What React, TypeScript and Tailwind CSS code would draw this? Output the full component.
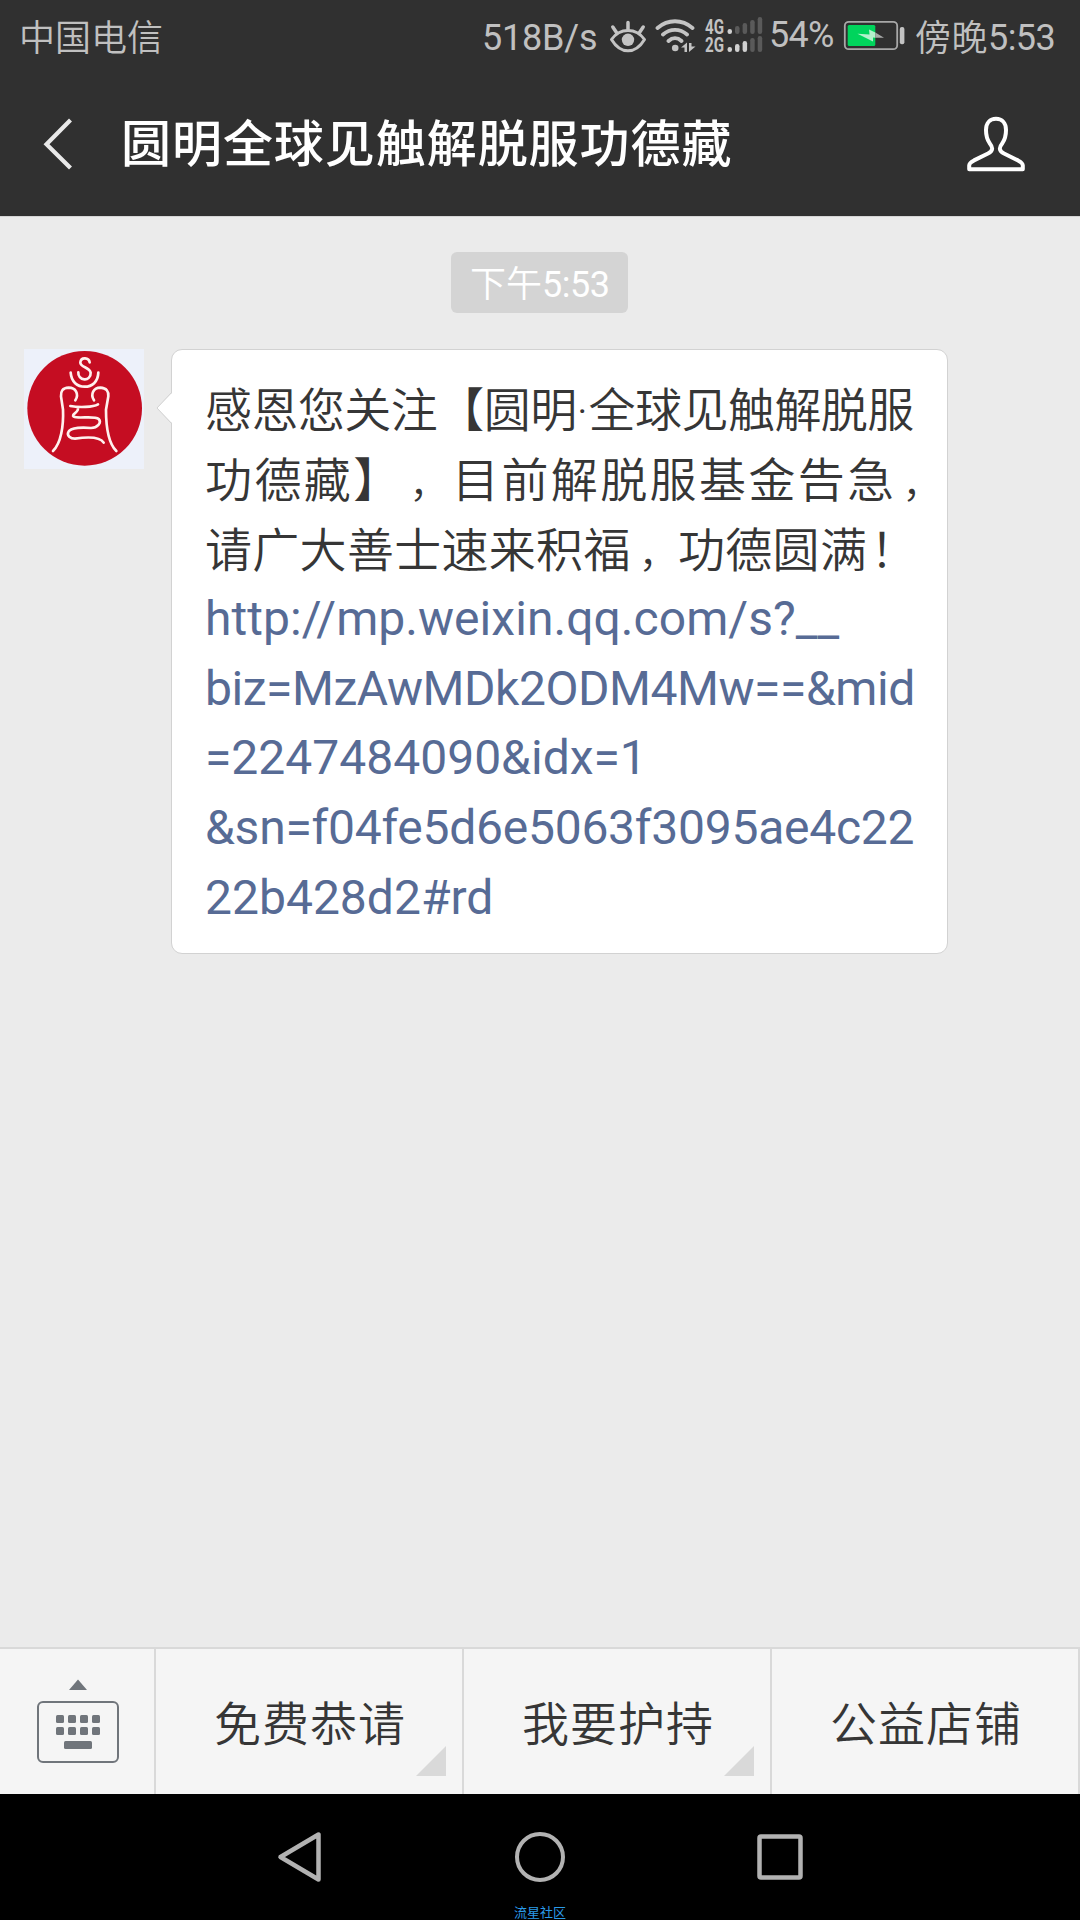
import type { ReactNode } from "react";

function EyeIcon() {
  return (
    <svg className="mt-[20px] h-[34px] w-[38px] shrink-0" viewBox="609 20 38 34" fill="none" stroke="#c3c3c3" strokeWidth="3">
      <path d="M611.5 39.5C616 33 622 30.500 628 30.500S640 33 644.500 39.500C640 47 634 50.800 628 50.800S616 47 611.500 39.500Z" strokeLinejoin="round" />
      <circle cx="628" cy="39.800" r="6.200" fill="#c3c3c3" stroke="none" />
      <path d="M628 22.500V29M612.800 27L616.500 32.500M643.200 27L639.500 32.500" strokeLinecap="round" strokeWidth="3.500" />
    </svg>
  );
}

function WifiIcon() {
  return (
    <svg className="ml-[8px] mt-[17px] h-[37px] w-[41px] shrink-0" viewBox="655 17 41 37" fill="none" stroke="#c3c3c3" strokeWidth="3.800" strokeLinecap="round">
      <path d="M657.500 28C668 19 682 19 692.500 28M663 34.500C670 28.300 680 28.300 687 34.500M668.500 41C672.500 37.300 677.500 37.300 681.500 41" />
      <circle cx="675.200" cy="48" r="3.300" fill="#c3c3c3" stroke="none" />
      <path d="M681 47.500L687 42.500V52H684.500V47.500ZM689 43H691.500V46.500H695.500L689 52Z" fill="#c3c3c3" stroke="none" />
    </svg>
  );
}

function SignalIcon() {
  const bars = [
    { x: 727.5, h: 5 },
    { x: 735, h: 8 },
    { x: 742.6, h: 11 },
    { x: 750.2, h: 14 },
    { x: 757.7, h: 17 },
  ];
  return (
    <svg className="ml-[8px] mt-[12px] h-[48px] w-[60px] shrink-0" viewBox="704 12 60 48">
      <g fill="#c3c3c3" fontFamily="Roboto, sans-serif" fontWeight="700" fontSize="20">
        <text x="705" y="34" textLength="19" lengthAdjust="spacingAndGlyphs">4G</text>
        <text x="705" y="52" textLength="19" lengthAdjust="spacingAndGlyphs">2G</text>
      </g>
      {bars.map((b, i) => (
        <g key={b.x}>
          <rect x={b.x} y={34 - b.h} width="4.500" height={b.h} rx="2.200" fill={i < 1 ? "#d0d0d0" : "#5a5a5a"} />
          <rect x={b.x} y={52 - (i === 4 ? 16 : b.h)} width="4.500" height={i === 4 ? 16 : b.h} rx="2.200" fill={i < 3 ? "#d0d0d0" : "#5a5a5a"} />
        </g>
      ))}
    </svg>
  );
}

function BatteryIcon() {
  return (
    <svg className="ml-[9px] mt-[20px] h-[32px] w-[64px] shrink-0" viewBox="842 20 64 32">
      <rect x="844.800" y="21.800" width="52.400" height="27.400" rx="4" fill="none" stroke="#a8a8a8" strokeWidth="1.800" />
      <rect x="847.700" y="25" width="27.600" height="21" rx="1.500" fill="#00d45c" />
      <path d="M857.500 33.700L869.500 34.500L869 29.500L875.300 32.500V37.800L873 37.500V41.500Z" fill="#b4f2cd" />
      <path d="M875.300 32.500L884 37.800H875.300Z" fill="#a8aaa9" />
      <rect x="899.800" y="27" width="4.600" height="17.300" rx="2" fill="#c3c3c3" />
    </svg>
  );
}

function StatusBar() {
  return (
    <div className="flex h-[72px] items-start whitespace-nowrap pl-[19px] text-[36px] leading-[44px] text-[#c0c0c0]">
      <span className="mt-[17px] w-[463px] shrink-0 font-[350]">中国电信</span>
      <span className="mt-[16px] w-[127px] shrink-0 tracking-[-0.200px]">518B/s</span>
      <EyeIcon />
      <WifiIcon />
      <SignalIcon />
      <span className="ml-[5px] mt-[13px] w-[64px] shrink-0 tracking-[-0.700px]">54%</span>
      <BatteryIcon />
      <span className="ml-[9px] mt-[16px] flex"><span className="pt-[1px] font-[350] tracking-[0.500px]">傍晚</span><span className="tracking-[-0.600px]">5:53</span></span>
    </div>
  );
}

function TitleBar() {
  return (
    <header className="flex h-[144px] items-start">
      <svg className="ml-[40px] mt-[44px] h-[56px] w-[36px]" viewBox="40 116 36 56" fill="none" stroke="#e9e9e9" strokeWidth="4.200">
        <path d="M70.500 120L46.500 144.200L70.500 168" />
      </svg>
      <h1 className="ml-[45px] mt-[38px] w-[843px] whitespace-nowrap text-[50px] font-medium leading-[70px] tracking-[0.950px] text-white">圆明全球见触解脱服功德藏</h1>
      <svg className="mt-[42px] h-[60px] w-[64px]" viewBox="964 114 64 60" fill="none" stroke="#fff" strokeWidth="4" strokeLinejoin="round">
        <path d="M969.200 169.200V165.500C969.200 163 971 162 974 160.400L988 153.500C993.500 150.500 993 147.500 989.500 143C986.500 138.500 986 135 986 130C986 123 990 118.800 996 118.800S1006 123 1006 130C1006 135 1005.500 138.500 1002.500 143C999 147.500 998.500 150.500 1004 153.500L1018 160.400C1021 162 1022.800 163 1022.800 165.500V169.200Z" />
      </svg>
    </header>
  );
}

function Avatar() {
  return (
    <svg className="h-[120px] w-[120px] shrink-0" viewBox="42 42 360 360" fill="none">
      <rect x="42" y="42" width="360" height="360" fill="#edf1fa" />
      <circle cx="224" cy="220" r="172" fill="#c50d22" />
      <g stroke="#fff1ee" strokeWidth="8" strokeLinecap="round" strokeLinejoin="round">
        <path d="M239 82C237 67 213 65 211 82C210 97 239 96 242 113C243 127 232 134 223 133C212 132 204 123 205 112" />
        <path d="M182 113C184 141 202 155 224 155S264 141 265 113" />
        <path d="M196 196C208 177 197 158 176 158C157 159 152 169 153 184L159 224C161 273 153 325 129 348" />
        <path d="M252 196C240 177 251 158 271 158C290 159 296 169 295 184L288 224C288 273 296 325 319 348" />
        <path d="M181 213C207 218 249 217 264 208M203 218C210 229 182 239 191 245C205 252 253 241 266 252C276 263 262 279 243 279C223 277 181 276 175 291C170 302 181 311 195 311C222 307 269 303 281 323" />
      </g>
    </svg>
  );
}

function Glyph({ children, className }: { children: ReactNode; className: string }) {
  return <span className={`inline-block ${className}`}>{children}</span>;
}

function MessageBubble() {
  return (
    <div className="relative ml-[27px] h-[605px] w-[777px] rounded-[11px] border border-[#d2d2d2] bg-white pl-[33px] pt-[26px] text-[47px] leading-[69.700px] text-[#363636]">
      <svg className="absolute left-[-16px] top-[41px] h-[34px] w-[18px]" viewBox="0 0 18 34">
        <path d="M17 1L1 17L17 33Z" fill="#fff" />
        <path d="M15.500 1.500L1 17L15.500 32.500" fill="none" stroke="#d2d2d2" />
      </svg>
      <p className="whitespace-nowrap font-[350]">
        <span className="block h-[70px] tracking-[-0.550px]">感恩您关注【圆明<Glyph className="w-[12px]">·</Glyph>全球见触解脱服</span>
        <span className="block h-[70px] tracking-[2.400px]">功德藏】<Glyph className="w-[49.400px] pl-[7px] text-[39px] tracking-normal">，</Glyph>目前解脱服基金告急<Glyph className="w-[46px] pl-[6px] text-[39px] tracking-normal">，</Glyph></span>
        <span className="block h-[68px] tracking-[0.300px]">请广大善士速来积福<Glyph className="w-[47.300px] pl-[8px] text-[39px] tracking-normal">，</Glyph>功德圆满<Glyph className="pl-[3px]">！</Glyph></span>
        <a className="block text-[48px] font-normal text-[#576b95]">
          <span className="block tracking-[0.050px]">http://mp.weixin.qq.com/s?__</span>
          <span className="block tracking-[-0.450px]">biz=MzAwMDk2ODM4Mw==&amp;mid</span>
          <span className="block">=2247484090&amp;idx=1</span>
          <span className="block tracking-[-0.250px]">&amp;sn=f04fe5d6e5063f3095ae4c22</span>
          <span className="block">22b428d2#rd</span>
        </a>
      </p>
    </div>
  );
}

function MenuItem({ label, submenu }: { label: string; submenu?: boolean }) {
  return (
    <button className="relative flex h-full w-[308px] shrink-0 justify-center border-r-2 border-[#d9d9d9] pl-[2px] pt-[41px] text-[47px] font-[350] leading-[70px] tracking-[1px] text-[#363636]">
      {label}
      {submenu && (
        <svg className="absolute bottom-[18px] right-[16px] h-[30px] w-[30px]" viewBox="0 0 30 30">
          <path d="M30 0V30H0Z" fill="#d9d9d9" />
        </svg>
      )}
    </button>
  );
}

function MenuBar() {
  return (
    <div className="flex h-[147px] border-t-2 border-[#d9d9d9] bg-[#f5f5f5]">
      <div className="flex w-[156px] shrink-0 border-r-2 border-[#d9d9d9] pl-[36px] pt-[29px]">
        <svg className="h-[86px] w-[84px]" viewBox="36 1678 84 86" fill="#70757b">
          <path d="M78 1679.500L87 1690H69Z" />
          <rect x="38" y="1702" width="80" height="60" rx="5" fill="none" stroke="#70757b" strokeWidth="2" />
          {[56, 68, 80, 92].map((x) => (
            <g key={x}>
              <rect x={x} y="1715" width="8" height="8" rx="1.500" />
              <rect x={x} y="1727" width="8" height="8" rx="1.500" />
            </g>
          ))}
          <rect x="64" y="1741" width="28" height="8" rx="1.500" />
        </svg>
      </div>
      <MenuItem label="免费恭请" submenu />
      <MenuItem label="我要护持" submenu />
      <MenuItem label="公益店铺" />
    </div>
  );
}

function NavigationBar() {
  return (
    <nav className="flex h-[126px] flex-col items-center bg-black">
      <div className="flex w-full justify-center gap-[184px] pt-[35px]">
        <svg className="h-[56px] w-[56px]" viewBox="272 1829 56 56" fill="none" stroke="#b2b2b2" strokeWidth="4.500" strokeLinejoin="round">
          <path d="M318.500 1834.500V1879.500L280.500 1857Z" />
        </svg>
        <svg className="h-[56px] w-[56px]" viewBox="512 1829 56 56" fill="none" stroke="#b2b2b2" strokeWidth="4">
          <circle cx="540" cy="1857" r="23" />
        </svg>
        <svg className="h-[56px] w-[56px]" viewBox="752 1829 56 56" fill="none" stroke="#b2b2b2" strokeWidth="4.500">
          <rect x="759.500" y="1836.500" width="41" height="41" rx="1.500" />
        </svg>
      </div>
      <span className="mt-[21px] text-[13px] leading-[14px] text-[#2b9be8]">流星社区</span>
    </nav>
  );
}

export default function App() {
  return (
    <div className="flex h-[1920px] w-[1080px] flex-col overflow-hidden bg-[#ebebeb] font-[Roboto,'Noto_Sans_CJK_SC',sans-serif]" lang="zh-CN">
      <div className="h-[216px] shrink-0 bg-[#303030]">
        <StatusBar />
        <TitleBar />
      </div>
      <main className="flex h-[1431px] shrink-0 flex-col border-t border-[#d4d4d4]">
        <time className="ml-[451px] mt-[35px] flex h-[61px] w-[177px] whitespace-nowrap rounded-[6px] bg-[#d4d4d4] pl-[19px] pt-[11px] text-[36px] leading-[44px] text-white">
          <span className="font-[350]">下午</span><span className="tracking-[-0.500px]">5:53</span>
        </time>
        <section className="mt-[36px] flex pl-[24px]">
          <Avatar />
          <MessageBubble />
        </section>
      </main>
      <MenuBar />
      <NavigationBar />
    </div>
  );
}
